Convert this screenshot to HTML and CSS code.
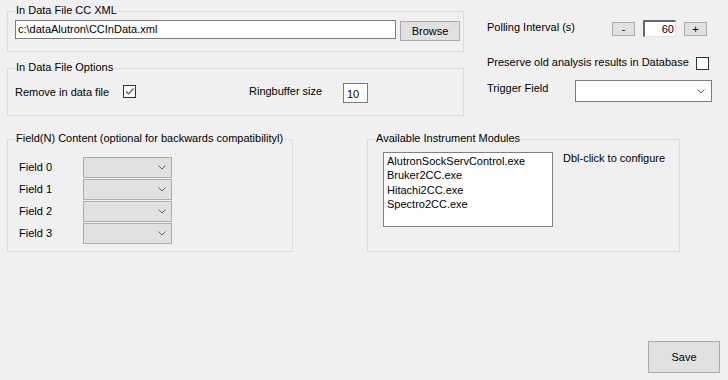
FILE: index.html
```html
<!DOCTYPE html>
<html>
<head>
<meta charset="utf-8">
<link rel="stylesheet" href="styles.css">
</head>
<body>
<div class="window">
  <div class="top">
    <div class="left-col">
      <div class="group g-xml">
        <span class="legend">In Data File CC XML</span>
        <div class="row">
          <div class="textbox path">c:\dataAlutron\CCInData.xml</div>
          <div class="btn browse">Browse</div>
        </div>
      </div>
      <div class="group g-opts">
        <span class="legend">In Data File Options</span>
        <div class="row opts-row">
          <span class="lbl lbl-remove">Remove in data file</span>
          <span class="check">
            <svg width="11" height="11" viewBox="0 0 11 11"><polyline points="2,5.5 4.5,8 9.5,2.5" fill="none" stroke="#5a5a5a" stroke-width="1.2"/></svg>
          </span>
          <span class="lbl lbl-ring">Ringbuffer size</span>
          <div class="textbox ring">10</div>
        </div>
      </div>
    </div>
    <div class="right-col">
      <div class="row poll-row">
        <span class="lbl lbl-poll">Polling Interval (s)</span>
        <div class="btn small">-</div>
        <div class="sunken">60</div>
        <div class="btn small">+</div>
      </div>
      <div class="row preserve-row">
        <span class="lbl lbl-preserve">Preserve old analysis results in Database</span>
        <span class="check"></span>
      </div>
      <div class="row trigger-row">
        <span class="lbl lbl-trigger">Trigger Field</span>
        <div class="combo white">
          <svg class="chev" width="8" height="5" viewBox="0 0 8 5"><polyline points="0.5,0.5 4,4 7.5,0.5" fill="none" stroke="#606060" stroke-width="1"/></svg>
        </div>
      </div>
    </div>
  </div>
  <div class="middle">
    <div class="group g-fields">
      <span class="legend">Field(N) Content (optional for backwards compatibilityl)</span>
      <div class="field-list">
        <div class="row field-row"><span class="lbl lbl-field">Field 0</span><div class="combo grey"><svg class="chev" width="8" height="5" viewBox="0 0 8 5"><polyline points="0.5,0.5 4,4 7.5,0.5" fill="none" stroke="#606060" stroke-width="1"/></svg></div></div>
        <div class="row field-row"><span class="lbl lbl-field">Field 1</span><div class="combo grey"><svg class="chev" width="8" height="5" viewBox="0 0 8 5"><polyline points="0.5,0.5 4,4 7.5,0.5" fill="none" stroke="#606060" stroke-width="1"/></svg></div></div>
        <div class="row field-row"><span class="lbl lbl-field">Field 2</span><div class="combo grey"><svg class="chev" width="8" height="5" viewBox="0 0 8 5"><polyline points="0.5,0.5 4,4 7.5,0.5" fill="none" stroke="#606060" stroke-width="1"/></svg></div></div>
        <div class="row field-row"><span class="lbl lbl-field">Field 3</span><div class="combo grey"><svg class="chev" width="8" height="5" viewBox="0 0 8 5"><polyline points="0.5,0.5 4,4 7.5,0.5" fill="none" stroke="#606060" stroke-width="1"/></svg></div></div>
      </div>
    </div>
    <div class="group g-modules">
      <span class="legend">Available Instrument Modules</span>
      <div class="row modules-row">
        <div class="listbox">
          <div class="item">AlutronSockServControl.exe</div>
          <div class="item">Bruker2CC.exe</div>
          <div class="item">Hitachi2CC.exe</div>
          <div class="item">Spectro2CC.exe</div>
        </div>
        <span class="lbl hint">Dbl-click to configure</span>
      </div>
    </div>
  </div>
  <div class="footer">
    <div class="btn save">Save</div>
  </div>
</div>
</body>
</html>
```
FILE: styles.css
```css
html, body {
  margin: 0;
  padding: 0;
  background: #f0f0f0;
}
body {
  font-family: "Liberation Sans", Arial, sans-serif;
  font-size: 11px;
  line-height: 13px;
  color: #000;
}
.window {
  width: 728px;
  height: 380px;
  padding-left: 7px;
  box-sizing: border-box;
}
.top {
  display: flex;
  align-items: flex-start;
}
.left-col {
  width: 457px;
  padding-top: 11px;
}
.group {
  position: relative;
  border: 1px solid #dcdcdc;
  box-sizing: border-box;
}
.legend {
  position: absolute;
  top: -8px;
  left: 7px;
  padding: 0 1px;
  background: #f0f0f0;
  white-space: nowrap;
}
.row {
  display: flex;
  align-items: center;
}
.g-xml {
  height: 41px;
  padding: 8px 0 0 7px;
}
.g-xml .row {
  align-items: flex-start;
}
.textbox {
  background: #fff;
  border: 1px solid #7a7a7a;
  box-sizing: border-box;
  padding-left: 2px;
  white-space: nowrap;
}
.path {
  width: 381px;
  height: 19px;
  line-height: 17px;
}
.btn {
  background: #e1e1e1;
  border: 1px solid #adadad;
  box-sizing: border-box;
  display: flex;
  align-items: center;
  justify-content: center;
}
.browse {
  width: 60px;
  height: 20px;
  margin-left: 4px;
  margin-top: 1px;
}
.g-opts {
  margin-top: 16px;
  height: 48px;
  padding: 14px 0 0 7px;
}
.opts-row {
  height: 20px;
}
.lbl {
  white-space: nowrap;
}
.lbl-remove {
  width: 108px;
  margin-top: -2px;
}
.check {
  width: 13px;
  height: 13px;
  border: 1px solid #333;
  box-sizing: border-box;
  background: #fff;
  display: flex;
  align-items: center;
  justify-content: center;
  flex: none;
}
.g-opts .check {
  margin-top: -3px;
}
.lbl-ring {
  margin-left: 113px;
  width: 94px;
  margin-top: -4px;
}
.ring {
  width: 25px;
  height: 20px;
  line-height: 18px;
  padding-left: 3px;
  padding-top: 1px;
}
.right-col {
  margin-left: 23px;
  padding-top: 20px;
}
.poll-row {
  height: 17px;
}
.lbl-poll {
  width: 125px;
  margin-top: -3px;
}
.small {
  width: 23px;
  height: 14px;
  margin-top: 1px;
  font-size: 11px;
}
.sunken {
  width: 33px;
  height: 17px;
  margin: 0 8px;
  box-sizing: border-box;
  background: #fff;
  border-top: 2px solid #696969;
  border-left: 2px solid #696969;
  border-right: 1px solid #e3e3e3;
  border-bottom: 1px solid #e3e3e3;
  text-align: right;
  padding-right: 1px;
  line-height: 14px;
}
.preserve-row {
  margin-top: 20px;
  height: 13px;
}
.lbl-preserve {
  width: 209px;
  margin-top: -2px;
}
.trigger-row {
  margin-top: 10px;
  height: 22px;
}
.lbl-trigger {
  width: 88px;
  margin-top: -6px;
}
.combo {
  position: relative;
  box-sizing: border-box;
  display: flex;
  align-items: center;
  justify-content: flex-end;
}
.combo.white {
  width: 137px;
  height: 22px;
  background: #fff;
  border: 1px solid #7a7a7a;
  padding-right: 6px;
}
.combo.grey {
  width: 89px;
  height: 21px;
  background: #e1e1e1;
  border: 1px solid #adadad;
  padding-right: 5px;
}
.chev {
  display: block;
}
.middle {
  display: flex;
  margin-top: 23px;
}
.g-fields {
  width: 286px;
  height: 113px;
  padding: 17px 0 0 11px;
}
.field-list {
  display: flex;
  flex-direction: column;
  gap: 1px;
}
.field-row {
  height: 21px;
}
.lbl-field {
  width: 64px;
}
.g-modules {
  margin-left: 74px;
  width: 313px;
  height: 113px;
  padding: 12px 0 0 15px;
}
.modules-row {
  align-items: flex-start;
}
.listbox {
  width: 170px;
  height: 75px;
  background: #fff;
  border: 1px solid #828282;
  box-sizing: border-box;
  padding: 1px 0 0 3px;
}
.item {
  font-size: 11px;
  line-height: 14.3px;
  white-space: nowrap;
}
.hint {
  margin-left: 10px;
}
.footer {
  display: flex;
  justify-content: flex-end;
  margin-top: 89px;
  padding-right: 8px;
}
.save {
  width: 72px;
  height: 32px;
}
```
